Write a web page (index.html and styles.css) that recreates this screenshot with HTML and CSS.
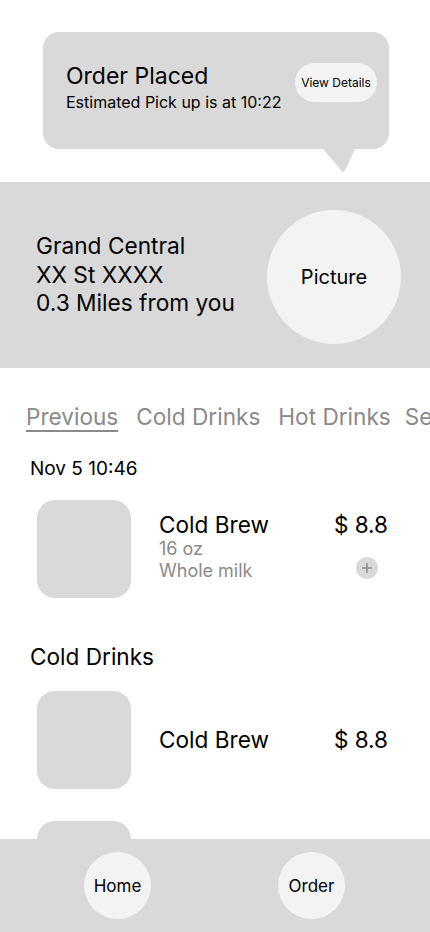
FILE: index.html
```html
<!DOCTYPE html>
<html lang="en">
<head>
<meta charset="utf-8">
<title>Order</title>
<link rel="stylesheet" href="styles.css">
</head>
<body>
<div class="screen">
  <div class="bubble">
    <div class="bubble-text">
      <div class="bubble-title">Order Placed</div>
      <div class="bubble-sub">Estimated Pick up is at 10:22</div>
    </div>
    <div class="details-btn">View Details</div>
    <svg class="bubble-tail" width="32" height="24" viewBox="0 0 32 24"><path d="M0 0 L32 0 L22.5 20.5 Q20 25 17.5 20.5 Z" fill="#d9d9d9"/></svg>
  </div>

  <section class="store">
    <div class="store-info">
      <div>Grand Central</div>
      <div>XX St XXXX</div>
      <div>0.3 Miles from you</div>
    </div>
    <div class="store-pic">Picture</div>
  </section>

  <nav class="tabs">
    <span class="tab active">Previous</span>
    <span class="tab">Cold Drinks</span>
    <span class="tab">Hot Drinks</span>
    <span class="tab tab-last">Seasonal</span>
  </nav>

  <div class="date">Nov 5 10:46</div>

  <div class="item">
    <div class="thumb"></div>
    <div class="item-info">
      <div class="item-name">Cold Brew</div>
      <div class="item-opt">16 oz</div>
      <div class="item-opt">Whole milk</div>
    </div>
    <div class="item-side">
      <div class="price">$ 8.8</div>
      <div class="plus"><svg width="12" height="12" viewBox="0 0 12 12"><path d="M6 1 V11 M1 6 H11" stroke="#8a8a8a" stroke-width="1.4"/></svg></div>
    </div>
  </div>

  <h2 class="section-title">Cold Drinks</h2>

  <div class="item item-center">
    <div class="thumb"></div>
    <div class="item-info">
      <div class="item-name">Cold Brew</div>
    </div>
    <div class="item-side">
      <div class="price">$ 8.8</div>
    </div>
  </div>

  <div class="item item-center">
    <div class="thumb"></div>
    <div class="item-info">
      <div class="item-name">Cold Brew</div>
    </div>
    <div class="item-side">
      <div class="price">$ 8.8</div>
    </div>
  </div>
</div>

<footer class="bottom-nav">
  <div class="nav-btn">Home</div>
  <div class="nav-btn">Order</div>
</footer>
</body>
</html>
```
FILE: styles.css
```css
* { box-sizing: border-box; }
html, body { margin: 0; padding: 0; }
body {
  font-family: Inter, "Noto Sans", sans-serif;
  color: #000;
  background: #fff;
  width: 430px;
  height: 932px;
  overflow: hidden;
}
.screen { padding-top: 32px; }

.bubble {
  position: relative;
  margin-left: 43px;
  width: 346px;
  height: 117px;
  background: #d9d9d9;
  border-radius: 16px;
  display: flex;
  align-items: flex-start;
  justify-content: space-between;
  padding: 31px 12px 0 23px;
}
.bubble-title { font-size: 23px; line-height: 26px; }
.bubble-sub { font-size: 16px; line-height: 20px; margin-top: 3px; }
.details-btn {
  width: 82px;
  height: 39px;
  border-radius: 20px;
  background: #f3f3f3;
  font-size: 12px;
  display: flex;
  align-items: center;
  justify-content: center;
  white-space: nowrap;
}
.bubble-tail {
  position: absolute;
  left: 280px;
  top: 117px;
  display: block;
}

.store {
  margin-top: 33px;
  height: 186px;
  background: #d9d9d9;
  display: flex;
  align-items: center;
  justify-content: space-between;
  padding: 0 29px 0 36px;
}
.store-info { font-size: 22.7px; line-height: 28.5px; }
.store-pic {
  width: 134px;
  height: 134px;
  border-radius: 50%;
  background: #f3f3f3;
  display: flex;
  align-items: center;
  justify-content: center;
  font-size: 20px;
  margin-top: 4px;
}

.tabs {
  margin-top: 36px;
  padding-left: 26px;
  display: flex;
  gap: 18px;
  white-space: nowrap;
  overflow: hidden;
}
.tab {
  font-size: 22.6px;
  line-height: 26px;
  color: #8a8a8a;
  border-bottom: 2px solid transparent;
}
.tab.active { border-bottom-color: #8a8a8a; }
.tab-last { margin-left: -4px; }

.date {
  margin-top: 26px;
  margin-left: 30px;
  font-size: 19px;
  line-height: 22px;
}

.item {
  display: flex;
  align-items: flex-start;
  padding: 0 42px 0 37px;
  margin-top: 20px;
}
.thumb {
  width: 94px;
  height: 98px;
  border-radius: 18px;
  background: #d9d9d9;
  flex: none;
}
.item-info { margin-left: 28px; flex: 1; padding-top: 12px; }
.item-name { font-size: 22.6px; line-height: 26px; }
.item-opt { font-size: 18px; line-height: 22px; color: #8a8a8a; }
.item-side {
  padding-top: 12px;
  display: flex;
  flex-direction: column;
  align-items: flex-end;
}
.price { font-size: 22.5px; line-height: 26px; }
.plus {
  margin-top: 19px;
  margin-right: 10px;
  width: 22px;
  height: 22px;
  border-radius: 50%;
  background: #d9d9d9;
  display: flex;
  align-items: center;
  justify-content: center;
}
.item-center { align-items: center; margin-top: 21px; }
.item-center .item-info, .item-center .item-side { padding-top: 0; }
.item-center + .item-center { margin-top: 32px; }

.section-title {
  margin: 46px 0 0 30px;
  font-size: 22.6px;
  line-height: 26px;
  font-weight: 400;
}

.bottom-nav {
  position: fixed;
  left: 0;
  right: 0;
  bottom: 0;
  height: 93px;
  background: #d9d9d9;
  display: flex;
  align-items: center;
  padding-left: 84px;
  gap: 127px;
}
.nav-btn {
  width: 67px;
  height: 67px;
  border-radius: 50%;
  background: #f3f3f3;
  display: flex;
  align-items: center;
  justify-content: center;
  font-size: 17px;
}
```
